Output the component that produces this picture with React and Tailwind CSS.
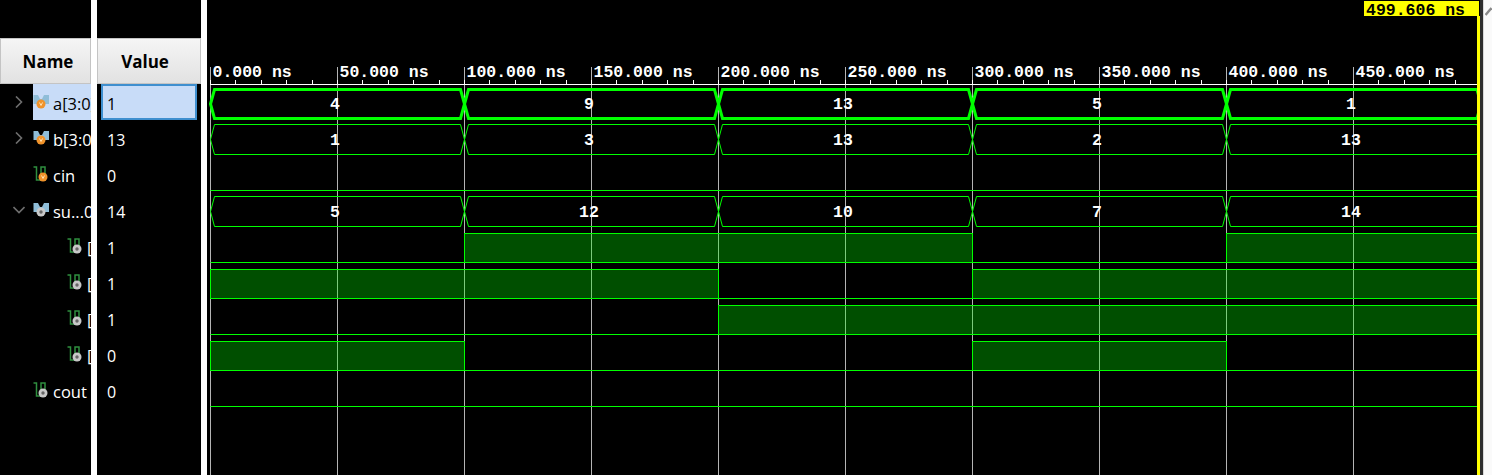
const GREEN = "#00ff00";
const X0 = 211;
const XEND = 1478;
const PER_NS = 2.54;
const MONO = "'Liberation Mono', monospace";

function x(ns) {
    return X0 + ns * PER_NS;
}

const signals = [
    { icon: "busIn", name: "a[3:0]", value: "1", indent: 33, arrow: "right", selected: true },
    { icon: "busIn", name: "b[3:0]", value: "13", indent: 33, arrow: "right" },
    { icon: "bitIn", name: "cin", value: "0", indent: 33 },
    { icon: "busOut", name: "su...0]", value: "14", indent: 33, arrow: "down" },
    { icon: "bitOut", name: "[3]", value: "1", indent: 67 },
    { icon: "bitOut", name: "[2]", value: "1", indent: 67 },
    { icon: "bitOut", name: "[1]", value: "1", indent: 67 },
    { icon: "bitOut", name: "[0]", value: "0", indent: 67 },
    { icon: "bitOut", name: "cout", value: "0", indent: 33 },
];

function SignalIcon({ type }) {
    const isIn = type === "busIn" || type === "bitIn";
    const isBus = type === "busIn" || type === "busOut";
    const cx = isBus ? 8 : 10;
    const cy = isBus ? 10 : 11;

    return (
        <svg width="18" height="20" viewBox="0 0 18 20" className="shrink-0">
            {isBus ? (
                <path d="M0.5 1 H5 L7 5 H9 L11 1 H16 V10 H12 L8 13 L4 10 H0.5 Z" fill="#8fbdd8" />
            ) : (
                <path d="M0.5 1 H3.5 V14 H8 V1 H12 V9" fill="none" stroke="#2f8f3f" strokeWidth="1.5" />
            )}
            <circle cx={cx} cy={cy} r="4.5" fill={isIn ? "#f0932b" : "#c8c8c8"} />
            {isIn ? (
                <path d={`M${cx - 1.5} ${cy - 1.5} L${cx} ${cy + 1.5} L${cx + 1.5} ${cy - 1.5}`} fill="none" stroke="#ffe0b0" strokeWidth="1" />
            ) : (
                <circle cx={cx} cy={cy} r="1.7" fill="#666666" />
            )}
        </svg>
    );
}

function Arrow({ dir }) {
    return (
        <svg width="12" height="12" viewBox="0 0 12 12" className="shrink-0">
            {dir === "right" ? (
                <path d="M3 0.5 L8.5 6 L3 11.5" fill="none" stroke="#6e6e6e" strokeWidth="1.6" />
            ) : (
                <path d="M0.5 3 L6 8.5 L11.5 3" fill="none" stroke="#6e6e6e" strokeWidth="1.6" />
            )}
        </svg>
    );
}

function NameRow({ s }) {
    return (
        <div className="h-9 shrink-0 relative flex items-center pt-1 overflow-hidden whitespace-nowrap">
            {s.arrow && (
                <span className="absolute left-[13px] top-[12px] flex">
                    <Arrow dir={s.arrow} />
                </span>
            )}
            {s.selected && <div className="absolute left-[33px] right-0 top-0 bottom-0 bg-[#c8dcf8]" />}
            <div className="relative flex items-center gap-[2px]" style={{ marginLeft: s.indent }}>
                <SignalIcon type={s.icon} />
                <span className={s.selected ? "text-black text-[16.5px]" : "text-white text-[16.5px]"}>{s.name}</span>
            </div>
        </div>
    );
}

function BusWave({ y, h, thick, values }) {
    const bottom = y + h;
    const mid = y + h / 2;
    let d = "";

    values.forEach((v, i) => {
        const a = x(i * 100) - 0.5;
        const b = i === values.length - 1 ? XEND + 3 : x((i + 1) * 100) - 0.5;
        d += `M${a} ${mid} L${a + 4} ${y} H${b - 4} L${b} ${mid} L${b - 4} ${bottom} H${a + 4} Z `;
    });

    return (
        <g>
            <path d={d} fill="none" stroke={GREEN} strokeWidth={thick ? 3 : 1} />
            {values.map((v, i) => (
                <text key={i} x={x(i * 100 + 50) - 3} y={mid + 5} textAnchor="middle" fill="#ffffff" fontSize="16.5" fontWeight="700" fontFamily={MONO}>
                    {v}
                </text>
            ))}
        </g>
    );
}

// join neighbouring bits that have the same level into one run
function toRuns(bits) {
    const runs = [];
    bits.forEach((bit, i) => {
        const last = runs[runs.length - 1];
        if (last && last.bit === bit) {
            last.end = i + 1;
        } else {
            runs.push({ bit, start: i, end: i + 1 });
        }
    });
    return runs;
}

function BitWave({ y, bits }) {
    const high = y - 14.5;
    const low = y + 14.5;
    return (
        <g>
            {toRuns(bits).map((run, i) => {
                const a = Math.round(x(run.start * 100)) - 0.5;
                const b = run.end === bits.length ? XEND + 2.5 : Math.round(x(run.end * 100)) - 0.5;
                return run.bit ? (
                    <rect key={i} x={a} y={high} width={b - a} height={low - high} fill={GREEN} fillOpacity="0.31" stroke={GREEN} strokeWidth="1" />
                ) : (
                    <path key={i} d={`M${a} ${low} H${b}`} stroke={GREEN} strokeWidth="1" fill="none" />
                );
            })}
        </g>
    );
}

function Waveform() {
    const minor = [];
    for (let ns = 0; ns <= 490; ns += 10) {
        minor.push(ns);
    }
    const majors = [0, 50, 100, 150, 200, 250, 300, 350, 400, 450];

    return (
        <svg width="1276" height="475" viewBox="207 0 1276 475" className="block">
            {/* grid lines and ruler */}
            <g>
                {majors.map((ns) => (
                    <path key={ns} d={`M${Math.round(x(ns)) - 0.5} 67 V475`} stroke="#b4b4b4" strokeWidth="1" />
                ))}
                {minor.map((ns) => (
                    <path key={ns} d={`M${Math.round(x(ns)) - 0.5} 80 V84`} stroke="#ffffff" strokeWidth="1" />
                ))}
                <path d="M210 84.5 H1480" stroke="#ffffff" strokeWidth="1" />
            </g>
            {majors.map((ns) => (
                <text key={ns} x={x(ns) + 1.5} y="77" fill="#ffffff" fontSize="16.5" fontWeight="700" fontFamily={MONO}>
                    {ns}.000 ns
                </text>
            ))}

            <BusWave y={89.5} h={29} thick values={["4", "9", "13", "5", "1"]} />
            <BusWave y={124.5} h={30} values={["1", "3", "13", "2", "13"]} />
            <BitWave y={176} bits={[0, 0, 0, 0, 0]} />
            <BusWave y={196.5} h={30} values={["5", "12", "10", "7", "14"]} />
            <BitWave y={248} bits={[0, 1, 1, 0, 1]} />
            <BitWave y={284} bits={[1, 1, 0, 1, 1]} />
            <BitWave y={320} bits={[0, 0, 1, 1, 1]} />
            <BitWave y={356} bits={[1, 0, 0, 1, 0]} />
            <BitWave y={392} bits={[0, 0, 0, 0, 0]} />

            {/* cursor */}
            <rect x="1480" y="0" width="3" height="475" fill="#2e2e2e" />
            <rect x="1477" y="16" width="3" height="459" fill="#ffff00" />
            <rect x="1364" y="1" width="115" height="15" fill="#ffff00" />
            <text x="1366" y="14.5" fill="#000000" fontSize="16.5" fontWeight="700" fontFamily={MONO}>
                499.606 ns
            </text>
        </svg>
    );
}

export default function App() {
    return (
        <div className="w-[1492px] h-[475px] overflow-hidden flex bg-white font-['Open_Sans',sans-serif] text-[16px]">
            <div className="w-[91px] shrink-0 h-full bg-black flex flex-col pt-[38px]">
                <div className="h-[46px] shrink-0 flex items-center justify-center pl-[5px] pt-[2px] font-bold text-[17px] text-black bg-linear-to-b from-[#f5f5f5] to-[#e2e2e2] border border-[#c4c4c4]">
                    Name
                </div>
                {signals.map((s, i) => (
                    <NameRow key={i} s={s} />
                ))}
            </div>

            <div className="w-[6px] shrink-0" />

            <div className="w-[104px] shrink-0 h-full bg-black flex flex-col pt-[38px]">
                <div className="h-[46px] shrink-0 flex items-center justify-center pr-[8px] pt-[2px] font-bold text-[17px] text-black bg-linear-to-b from-[#f5f5f5] to-[#e2e2e2] border border-[#c4c4c4]">
                    Value
                </div>
                {signals.map((s, i) => (
                    <div key={i} className="h-9 shrink-0 flex items-center pl-[10px] pt-1">
                        {s.selected ? (
                            <div className="h-9 -mt-1 ml-[-6px] w-[96px] pl-[4px] pt-1 flex items-center bg-[#c8dcf8] border-2 border-[#3f8fcf] text-black">
                                {s.value}
                            </div>
                        ) : (
                            <span className="text-white">{s.value}</span>
                        )}
                    </div>
                ))}
            </div>

            <div className="w-[6px] shrink-0" />

            <div className="w-[1276px] shrink-0 h-full bg-black">
                <Waveform />
            </div>

            <div className="w-[9px] shrink-0 h-full bg-[#fafafa] border-l border-[#d8d8d8] pt-[7px] pl-[1px]">
                <svg width="7" height="9" viewBox="0 0 7 9" className="block">
                    <path d="M0.5 8 L6.5 1" stroke="#8a8a8a" strokeWidth="2.5" fill="none" />
                </svg>
            </div>
        </div>
    );
}
